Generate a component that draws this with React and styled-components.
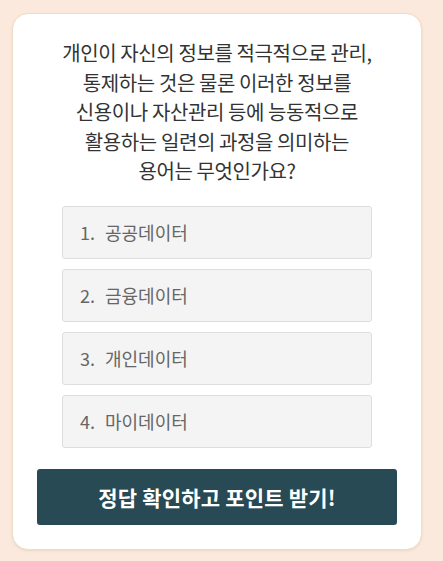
import styled, { createGlobalStyle } from 'styled-components';

const GlobalStyle = createGlobalStyle`
  html, body {
    margin: 0;
    padding: 0;
    background: #fae9dc;
  }
  body {
    font-family: 'Noto Sans CJK KR', 'Noto Sans', sans-serif;
  }
`;

const options = ['공공데이터', '금융데이터', '개인데이터', '마이데이터'];

export default function App() {
  return (
    <>
      <GlobalStyle />
      <StyledPage>
        <StyledCard>
          <StyledQuestion>
            개인이 자신의 정보를 적극적으로 관리,
            <br />
            통제하는 것은 물론 이러한 정보를
            <br />
            신용이나 자산관리 등에 능동적으로
            <br />
            활용하는 일련의 과정을 의미하는
            <br />
            용어는 무엇인가요?
          </StyledQuestion>
          <StyledOptionList>
            {options.map((label, i) => (
              <StyledOption key={label}>
                <span className='num'>{i + 1}.</span>
                {label}
              </StyledOption>
            ))}
          </StyledOptionList>
          <StyledButton type='button'>정답 확인하고 포인트 받기!</StyledButton>
        </StyledCard>
      </StyledPage>
    </>
  );
}

const StyledPage = styled.div`
  width: 443px;
  height: 561px;
  box-sizing: border-box;
  padding: 13px 21px 11px 12px;
`;

const StyledCard = styled.div`
  width: 410px;
  height: 537px;
  box-sizing: border-box;
  background: #fff;
  border-radius: 16px;
  border: 1px solid #f1dcc9;
  box-shadow: 0 1px 2px rgba(210, 180, 150, 0.35);
  padding: 24px 24px 0;
  display: flex;
  flex-direction: column;
  align-items: center;
`;

const StyledQuestion = styled.p`
  margin: 0;
  text-align: center;
  font-size: 20px;
  line-height: 29.5px;
  letter-spacing: -0.4px;
  color: #333;
`;

const StyledOptionList = styled.div`
  margin-top: 20px;
  width: 310px;
  display: flex;
  flex-direction: column;
  gap: 10px;
`;

const StyledOption = styled.div`
  height: 53px;
  box-sizing: border-box;
  background: #f4f4f4;
  border: 1px solid #dedede;
  border-radius: 3px;
  padding-left: 17px;
  display: flex;
  align-items: center;
  font-size: 18px;
  color: #666;

  & .num {
    width: 25px;
  }
`;

const StyledButton = styled.button`
  margin-top: 21px;
  width: 360px;
  height: 56px;
  border: none;
  border-radius: 3px;
  background: #284a55;
  color: #fff;
  font-family: inherit;
  font-size: 21px;
  font-weight: 700;
  letter-spacing: 0.2px;
  cursor: pointer;
`;
